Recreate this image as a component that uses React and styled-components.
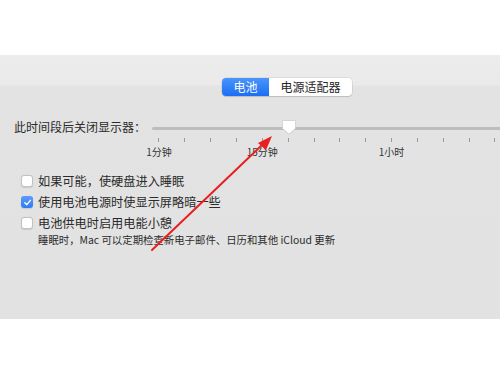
import React from "react";
import styled, { createGlobalStyle } from "styled-components";

const GlobalStyle = createGlobalStyle`
  html, body {
    margin: 0;
    padding: 0;
    background: #ffffff;
  }
  body {
    font-family: "Noto Sans CJK SC", "Liberation Sans", sans-serif;
    color: #2b2b2b;
  }
`;

const Page = styled.div`
  position: relative;
  width: 500px;
  height: 375px;
  padding-top: 55px;
  box-sizing: border-box;
  overflow: hidden;
`;

const Panel = styled.div`
  height: 264px;
  background: linear-gradient(
    to bottom,
    #ececec 0,
    #eaeaea 30px,
    #e3e3e3 31px,
    #e2e2e2 100%
  );
  padding-top: 23px;
  box-sizing: border-box;
`;

const Segmented = styled.div`
  display: flex;
  margin-left: 222px;
  width: 130px;
  height: 18px;
  border-radius: 4px;
  background: #ffffff;
  box-shadow: 0 0 0 0.5px rgba(0, 0, 0, 0.12), 0 1px 1px rgba(0, 0, 0, 0.12);
  overflow: hidden;
`;

const Segment = styled.div`
  width: ${(p) => p.$width}px;
  display: flex;
  align-items: center;
  justify-content: center;
  font-size: 12px;
  line-height: 18px;
  color: ${(p) => (p.$active ? "#ffffff" : "#262626")};
  background: ${(p) =>
    p.$active ? "linear-gradient(to bottom, #4a95fb, #1c6ef3)" : "transparent"};
`;

const SliderRow = styled.div`
  display: flex;
  align-items: flex-start;
  margin-top: 22px;
`;

const Label = styled.div`
  font-size: 12px;
  line-height: 18px;
  margin-left: 14px;
  width: 135px;
  white-space: nowrap;
  margin-top: 0;
`;

const SliderArea = styled.div`
  position: relative;
  flex: 1;
  padding-top: 9px;
`;

const Track = styled.div`
  height: 3px;
  margin-left: 6px;
  background: #bdbdbd;
  border-radius: 2px;
`;

const Thumb = styled.svg`
  position: absolute;
  left: ${(p) => p.$left}px;
  top: 1px;
  filter: drop-shadow(0 0.5px 0.6px rgba(0, 0, 0, 0.25));
`;

const Ticks = styled.div`
  display: flex;
  margin-top: 8px;
`;

const TickCol = styled.div`
  width: 25.85px;
  flex: none;
  display: flex;
  flex-direction: column;
  align-items: center;
`;

const TickMark = styled.div`
  width: 1px;
  height: 4px;
  background: #9a9a9a;
`;

const TickLabel = styled.div`
  font-size: 10px;
  line-height: 12px;
  margin-top: 4px;
  white-space: nowrap;
  color: #333333;
  height: 12px;
`;

const Options = styled.div`
  margin-top: 14px;
  margin-left: 21px;
  display: flex;
  flex-direction: column;
  gap: 3px;
`;

const OptionRow = styled.div`
  display: flex;
  align-items: center;
  gap: 5px;
  height: 18px;
  font-size: 12.2px;
`;

const Box = styled.div`
  width: 12px;
  height: 12px;
  border-radius: 3px;
  box-sizing: border-box;
  display: flex;
  align-items: center;
  justify-content: center;
  background: ${(p) =>
    p.$checked ? "linear-gradient(to bottom, #5a9cfa, #2f7af3)" : "#ffffff"};
  border: ${(p) => (p.$checked ? "none" : "0.5px solid #c2c2c2")};
  box-shadow: 0 0.5px 1px rgba(0, 0, 0, 0.12);
`;

const Note = styled.div`
  margin-left: 17px;
  margin-top: -2px;
  font-size: 10.4px;
  line-height: 14px;
  color: #2b2b2b;
`;

const Annotation = styled.svg`
  position: absolute;
  left: 0;
  top: 0;
  pointer-events: none;
`;

const ticks = Array.from({ length: 14 }, (_, i) => i);
const tickLabels = { 0: "1分钟", 4: "15分钟", 9: "1小时" };

const options = [
  { text: "如果可能，使硬盘进入睡眠", checked: false },
  { text: "使用电池电源时使显示屏略暗一些", checked: true },
  { text: "电池供电时启用电能小憩", checked: false },
];

export default function App() {
  return (
    <>
      <GlobalStyle />
      <Page>
        <Panel>
          <Segmented>
            <Segment $active $width={47}>
              电池
            </Segment>
            <Segment $width={83}>电源适配器</Segment>
          </Segmented>

          <SliderRow>
            <Label>此时间段后关闭显示器：</Label>
            <SliderArea>
              <Track />
              <Ticks>
                {ticks.map((i) => (
                  <TickCol key={i}>
                    <TickMark />
                    <TickLabel>{tickLabels[i] || ""}</TickLabel>
                  </TickCol>
                ))}
              </Ticks>
              <Thumb $left={135} width="16" height="17" viewBox="0 0 16 17">
                <path
                  d="M2.6 1.5 H13.4 Q14.5 1.5 14.5 2.6 V9.6 L8 15 L1.5 9.6 V2.6 Q1.5 1.5 2.6 1.5 Z"
                  fill="#ffffff"
                  stroke="#cfcfcf"
                  strokeWidth="0.5"
                />
              </Thumb>
            </SliderArea>
          </SliderRow>

          <Options>
            {options.map((o) => (
              <OptionRow key={o.text}>
                <Box $checked={o.checked}>
                  {o.checked && (
                    <svg width="9" height="9" viewBox="0 0 10 10">
                      <path
                        d="M2 5.2 L4.2 7.4 L8.2 2.6"
                        fill="none"
                        stroke="#ffffff"
                        strokeWidth="1.6"
                        strokeLinecap="round"
                        strokeLinejoin="round"
                      />
                    </svg>
                  )}
                </Box>
                {o.text}
              </OptionRow>
            ))}
            <Note>睡眠时，Mac 可以定期检查新电子邮件、日历和其他 iCloud 更新</Note>
          </Options>
        </Panel>

        <Annotation width="500" height="375" viewBox="0 0 500 375">
          <line
            x1="152"
            y1="250"
            x2="262"
            y2="145"
            stroke="#e8201f"
            strokeWidth="2"
            strokeLinecap="round"
          />
          <polygon points="272,136 258,143 266,150" fill="#e8201f" />
        </Annotation>
      </Page>
    </>
  );
}
